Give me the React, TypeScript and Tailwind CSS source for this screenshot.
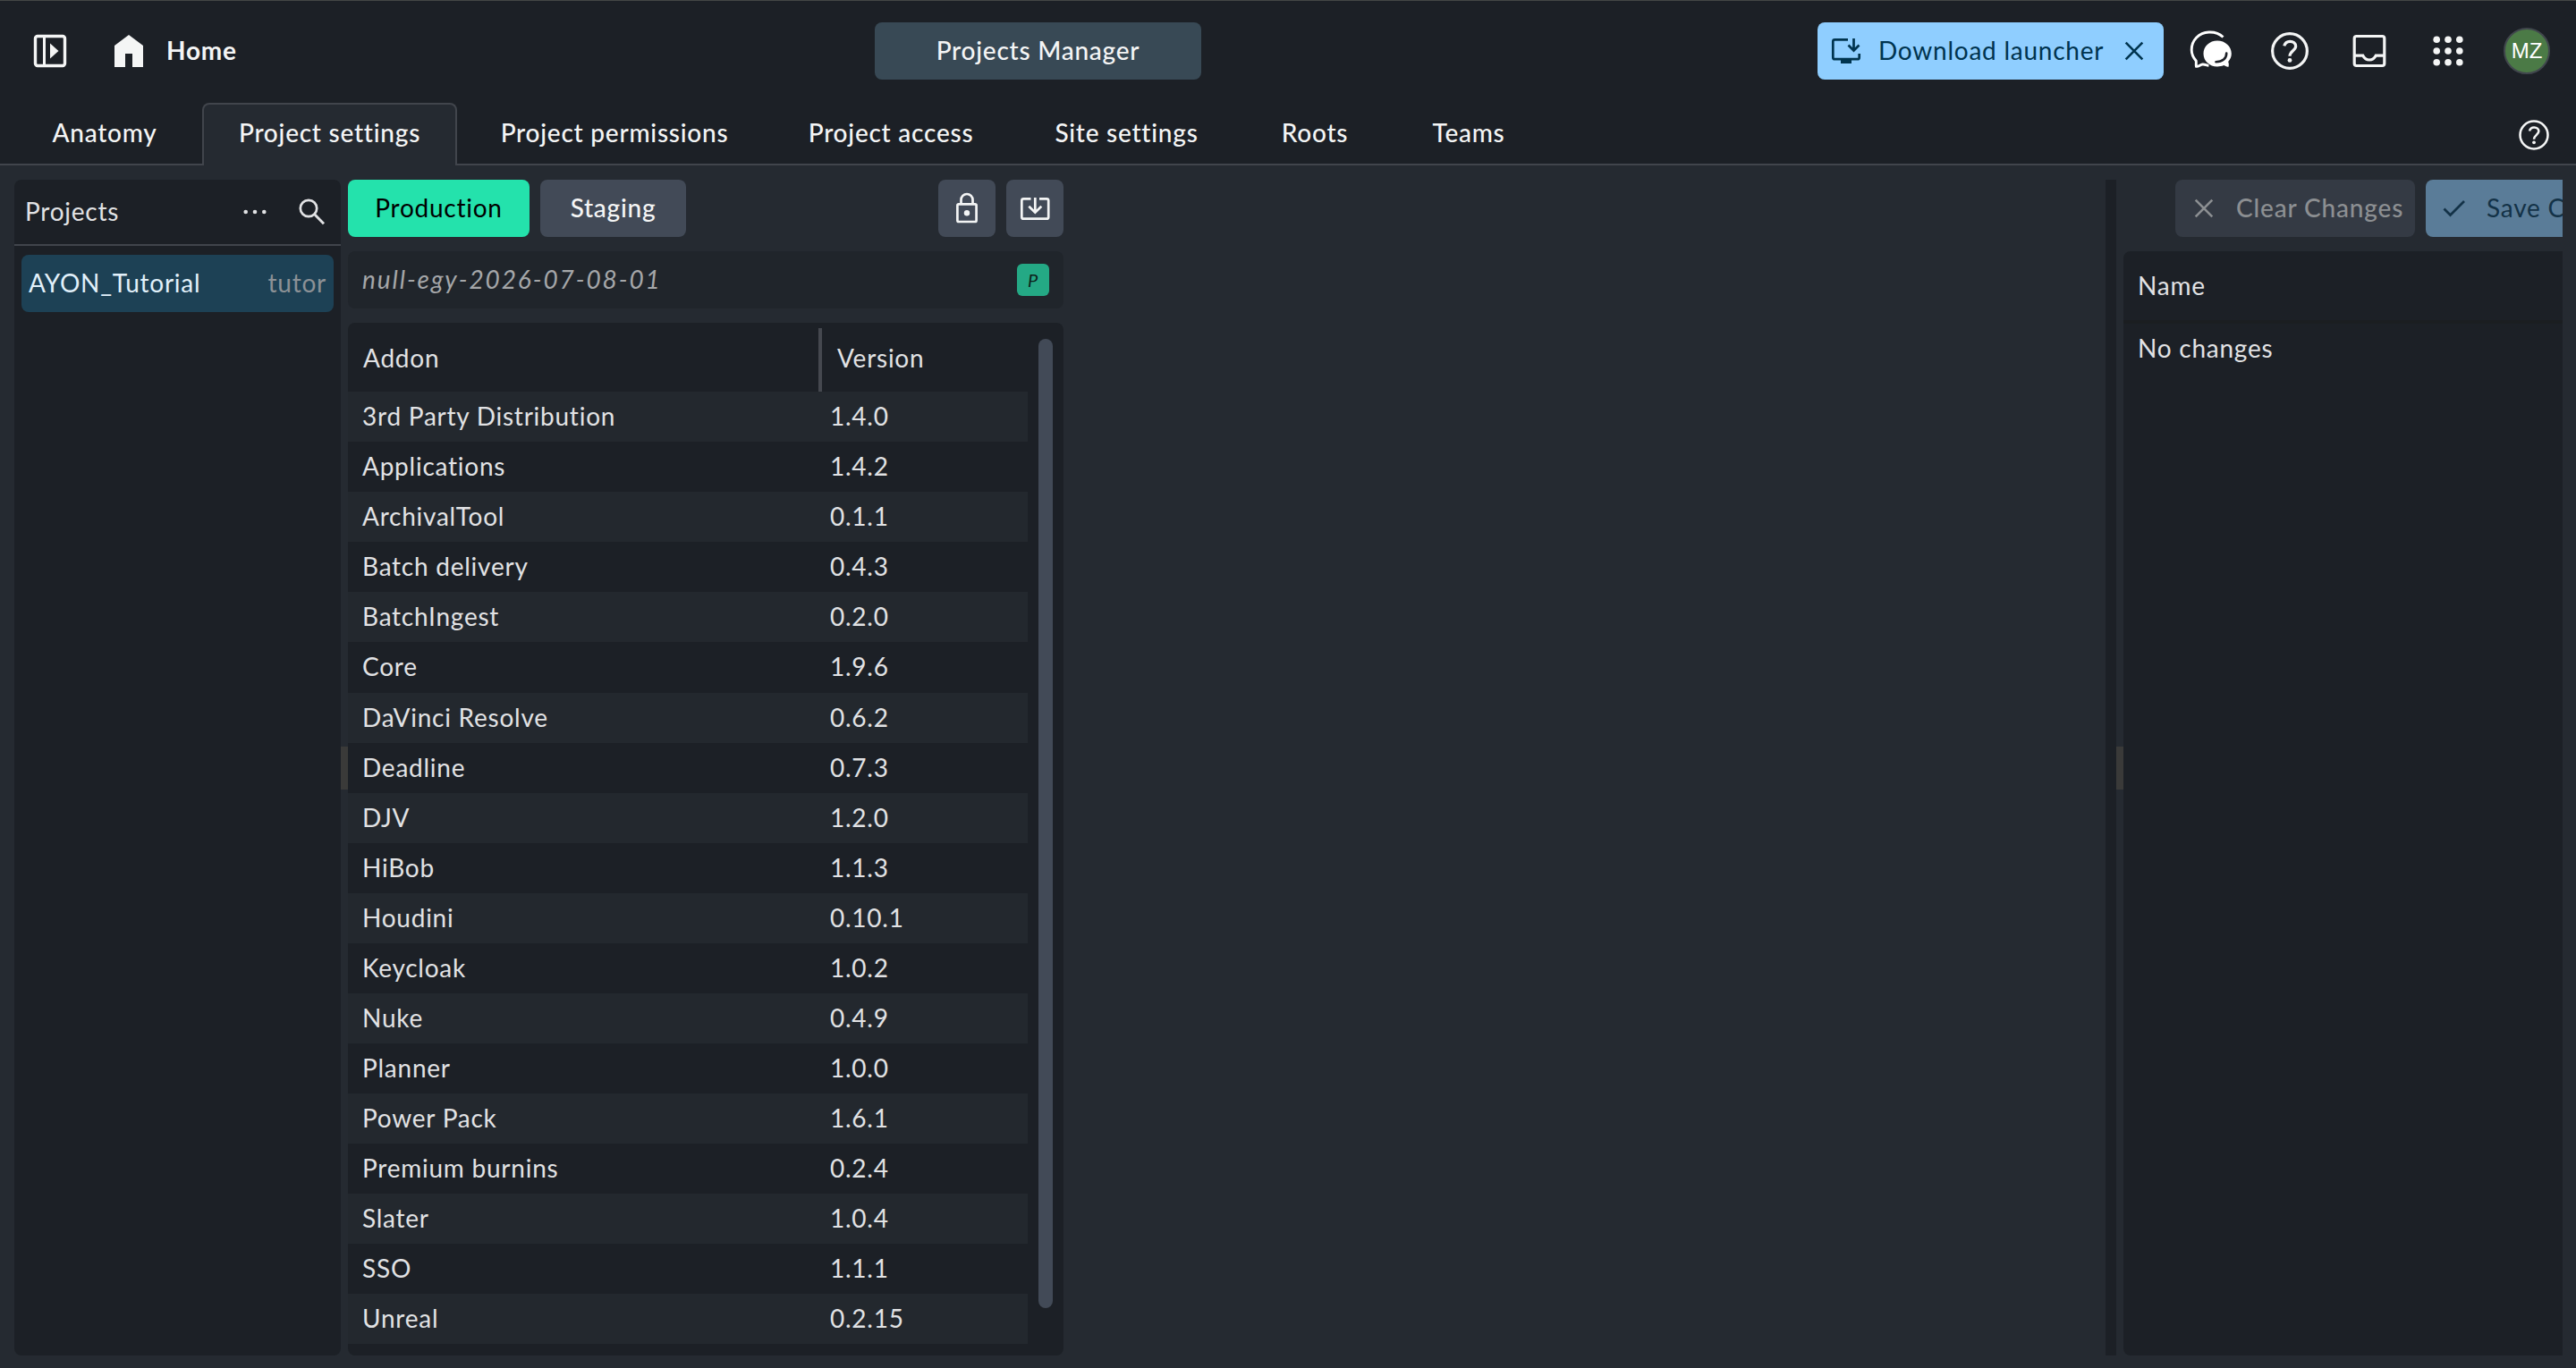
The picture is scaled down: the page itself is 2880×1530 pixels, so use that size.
import type { ReactNode } from 'react';
import clsx from 'clsx';

const tabs = [
  { label: 'Anatomy', width: 'w-[202px]' },
  { label: 'Project settings', width: 'w-[285px]', active: true },
  { label: 'Project permissions', width: 'w-[336px]' },
  { label: 'Project access', width: 'w-[266px]' },
  { label: 'Site settings', width: 'w-[245px]' },
  { label: 'Roots', width: 'w-[160px]' },
  { label: 'Teams', width: 'w-[168px]' },
];

const addons = [
  { name: '3rd Party Distribution', version: '1.4.0' },
  { name: 'Applications', version: '1.4.2' },
  { name: 'ArchivalTool', version: '0.1.1' },
  { name: 'Batch delivery', version: '0.4.3' },
  { name: 'BatchIngest', version: '0.2.0' },
  { name: 'Core', version: '1.9.6' },
  { name: 'DaVinci Resolve', version: '0.6.2' },
  { name: 'Deadline', version: '0.7.3' },
  { name: 'DJV', version: '1.2.0' },
  { name: 'HiBob', version: '1.1.3' },
  { name: 'Houdini', version: '0.10.1' },
  { name: 'Keycloak', version: '1.0.2' },
  { name: 'Nuke', version: '0.4.9' },
  { name: 'Planner', version: '1.0.0' },
  { name: 'Power Pack', version: '1.6.1' },
  { name: 'Premium burnins', version: '0.2.4' },
  { name: 'Slater', version: '1.0.4' },
  { name: 'SSO', version: '1.1.1' },
  { name: 'Unreal', version: '0.2.15' },
];

interface IconProps {
  className?: string;
}

const Svg = ({ size, className, children }: IconProps & { size: number; children: ReactNode }) => (
  <svg
    width={size}
    height={size}
    viewBox={`0 0 ${size} ${size}`}
    fill="none"
    stroke="currentColor"
    className={clsx('shrink-0', className)}
  >
    {children}
  </svg>
);

const PanelIcon = () => (
  <Svg size={48}>
    <rect x="7.5" y="7.5" width="33" height="33" rx="2.5" strokeWidth="3.4" />
    <path d="M17.5 7v34" strokeWidth="3" />
    <path d="M24 15.5v17l9.5-8.5z" fill="currentColor" stroke="none" />
  </Svg>
);

const HomeIcon = () => (
  <Svg size={48}>
    <path d="M8 42V18L24 6l16 12v24H28V27h-8v15z" fill="currentColor" stroke="none" />
  </Svg>
);

const HelpIcon = ({ size }: { size: number }) => (
  <svg width={size} height={size} viewBox="0 0 48 48" fill="none" stroke="currentColor" className="shrink-0">
    <circle cx="24" cy="24" r="18.6" strokeWidth="3.1" />
    <path d="M18 18.6c.9-3.2 3.2-4.9 6.2-4.9 3.5 0 6.2 2.2 6.2 5.3 0 4.4-6.4 5.4-6.4 10.6" strokeWidth="3.1" />
    <circle cx="24" cy="34" r="2.3" fill="currentColor" stroke="none" />
  </svg>
);

const InboxIcon = () => (
  <Svg size={48}>
    <rect x="7.2" y="7.5" width="33.6" height="33" rx="2.5" strokeWidth="3.2" />
    <path d="M7 29.2h9.8c1.6 3 4 4.8 7.2 4.8s5.6-1.8 7.2-4.8H41" strokeWidth="3.2" />
  </Svg>
);

const AppsIcon = () => (
  <Svg size={48}>
    {[11.2, 24, 36.8].map((y) =>
      [11.2, 24, 36.8].map((x) => <circle key={`${x}-${y}`} cx={x} cy={y} r="3.8" fill="currentColor" stroke="none" />)
    )}
  </Svg>
);

const ChatIcon = () => (
  <Svg size={48}>
    <path
      d="M38.5 8.5C34.500 4.700 28.500 2.700 22.500 3 11.500 3.500 3.200 12 3.200 22.800c0 5 1.900 8.700 5 12.200.5 1.800-.3 4.500.2 6.300 2.500.6 4.300-1.900 7-2.300 3-.4 4.300 1.300 7 1.400"
      strokeWidth="2.9"
    />
    <path
      d="M32 12.500c8.700 0 15.800 6.300 15.800 14.500 0 3.700-1.500 6.600-3.600 9 .5 1.600 1 3.400.3 5.700-2.200.2-3.700-.7-5.300-1.600-2.200 1-4.700 1.400-7.200 1.400-8.700 0-15.500-6.300-15.500-14.500S23.300 12.500 32 12.500z"
      fill="currentColor"
      stroke="none"
    />
    <path d="M42.200 26.500c.1 5.800-4.400 9.700-11.700 9.700" stroke="#1c1f26" strokeWidth="2.6" strokeLinecap="round" />
  </Svg>
);

const InstallDesktopIcon = () => (
  <Svg size={40}>
    <path d="M22 7.300H7.300a2 2 0 0 0-2 2v17.900a2 2 0 0 0 2 2h25.400a2 2 0 0 0 2-2V23" strokeWidth="2.7" />
    <path d="M14 29.500h12V34H14z" fill="currentColor" stroke="none" />
    <path d="M28.500 6v12.500M22.500 13.500l6 6 6-6" strokeWidth="2.7" />
  </Svg>
);

const CloseIcon = () => (
  <Svg size={40}>
    <path d="M10.700 10.700l18.600 18.600M29.300 10.700L10.700 29.300" strokeWidth="2.6" />
  </Svg>
);

const CheckIcon = () => (
  <Svg size={40}>
    <path d="M8.500 20.500l7 7L31 12" strokeWidth="2.7" />
  </Svg>
);

const MoreIcon = () => (
  <Svg size={40}>
    {[9.7, 20, 30.3].map((x) => (
      <circle key={x} cx={x} cy="20" r="2.3" fill="currentColor" stroke="none" />
    ))}
  </Svg>
);

const SearchIcon = () => (
  <Svg size={40}>
    <circle cx="16" cy="16" r="9.2" strokeWidth="2.7" />
    <path d="M22.500 22.500l10.500 10.800" strokeWidth="2.9" />
  </Svg>
);

const LockIcon = () => (
  <Svg size={40}>
    <rect x="9.4" y="15.4" width="21.2" height="19.6" rx="1.5" strokeWidth="2.7" />
    <path d="M13.500 15v-4.500a6.500 6.500 0 0 1 13 0V15" strokeWidth="2.7" />
    <circle cx="20" cy="25.3" r="3.200" fill="currentColor" stroke="none" />
  </Svg>
);

const ImportIcon = () => (
  <Svg size={40}>
    <path d="M15.500 9.400H7.300a2 2 0 0 0-2 2v18.300a2 2 0 0 0 2 2h25.900a2 2 0 0 0 2-2V11.400a2 2 0 0 0-2-2H25" strokeWidth="2.7" />
    <path d="M20.300 8v15.500M13.300 17.700l7 7 7-7" strokeWidth="2.7" />
  </Svg>
);

const ResizeHandle = () => (
  <div className="flex w-2 shrink-0 items-center">
    <div className="h-12 w-full bg-[#3a3a39]" />
  </div>
);

const Header = () => (
  <header className="grid h-[114px] grid-cols-[978px_365px_1fr] border-t border-[#444746] pr-[29px]">
    <div className="flex h-28 items-center pl-8">
      <PanelIcon />
      <div className="ml-10 flex items-center gap-[18px]">
        <HomeIcon />
        <span className="pb-0.5 font-bold">Home</span>
      </div>
    </div>
    <button className="mt-6 h-16 rounded-lg bg-[#384955] pb-0.5 font-medium">Projects Manager</button>
    <div className="flex h-28 items-center justify-end">
      <button className="flex h-16 w-[387px] items-center rounded-lg bg-[#8fceff] pl-3 text-[#00344f]">
        <InstallDesktopIcon />
        <span className="ml-4 w-[266px] pb-0.5 text-left">Download launcher</span>
        <CloseIcon />
      </button>
      <div className="ml-7 flex items-center gap-10">
        <span className="text-white">
          <ChatIcon />
        </span>
        <HelpIcon size={50} />
        <InboxIcon />
        <AppsIcon />
      </div>
      <div className="ml-[38px] flex size-[52px] items-center justify-center rounded-full border-2 border-[#41474d] bg-[#4b7a46] font-['Liberation_Sans',sans-serif] text-2xl tracking-normal text-white">
        MZ
      </div>
    </div>
  </header>
);

const TabBar = () => (
  <nav className="flex h-[71px] border-b-2 border-[#41454c] pr-[27px] pl-4">
    <div className="flex flex-1 gap-2 pt-px">
      {tabs.map((tab) => (
        <div
          key={tab.label}
          className={clsx(
            'flex justify-center rounded-t-lg border-2 border-b-0 pt-[11px] leading-10 font-medium',
            tab.width,
            tab.active ? 'h-[71px] border-[#41454c] bg-[#252a31]' : 'border-transparent'
          )}
        >
          {tab.label}
        </div>
      ))}
    </div>
    <div className="pt-[17px]">
      <HelpIcon size={40} />
    </div>
  </nav>
);

const ProjectList = () => (
  <aside className="w-[365px] shrink-0 rounded-lg bg-[#1c2026]">
    <div className="flex h-[74px] items-center border-b-2 border-[#41454c] pl-3 text-[#e1e2e4]">
      <span className="flex-1 pb-0.5">Projects</span>
      <MoreIcon />
      <div className="mr-3 ml-6">
        <SearchIcon />
      </div>
    </div>
    <div className="mx-2 mt-2.5 flex h-16 items-center justify-between rounded-lg bg-[#1d4155] px-2 pb-0.5 text-[#e1f0fa]">
      <span>AYON_Tutorial</span>
      <span className="text-[#8c9196]">tutor</span>
    </div>
  </aside>
);

const AddonTable = () => (
  <div className="flex flex-1 overflow-hidden rounded-lg bg-[#1c2026] text-[#e1e2e4]">
    <div className="w-[760px]">
      <div className="flex h-[77px] pt-1.5">
        <div className="w-[526px] pt-[13px] pl-[17px] leading-10">Addon</div>
        <div className="w-1 bg-[#45484f]" />
        <div className="pt-[13px] pl-[17px] leading-10">Version</div>
      </div>
      {addons.map((addon, i) => (
        <div
          key={addon.name}
          className={clsx('flex px-4 pt-[7px] leading-10', i === 5 ? 'h-[57px]' : 'h-14', i % 2 === 0 && 'bg-[#23282e]')}
        >
          <span className="w-[523px]">{addon.name}</span>
          <span>{addon.version}</span>
        </div>
      ))}
    </div>
    <div className="mt-[18px] ml-3 h-[1084px] w-4 rounded-full bg-[#424a57]" />
  </div>
);

const AddonPanel = () => (
  <section className="flex w-[800px] shrink-0 flex-col">
    <div className="flex h-16 gap-3">
      <button className="w-[203px] rounded-lg bg-[#24e2ac] pb-0.5 text-black">Production</button>
      <button className="w-[163px] rounded-lg bg-[#424a57] pb-0.5 font-medium">Staging</button>
      <button className="ml-auto flex size-16 items-center justify-center rounded-lg bg-[#424a57]">
        <LockIcon />
      </button>
      <button className="flex size-16 items-center justify-center rounded-lg bg-[#424a57]">
        <ImportIcon />
      </button>
    </div>
    <div className="my-4 flex h-16 shrink-0 items-center justify-between rounded-lg bg-[#20252b] px-4 text-[#a5a7a9] italic">
      <span className="pb-0.5 tracking-[0.068em]">null-egy-2026-07-08-01</span>
      <span className="flex size-9 items-center justify-center rounded-md bg-[#24a985] text-xl text-[#0d1f1a]">P</span>
    </div>
    <AddonTable />
  </section>
);

const ChangesPanel = () => (
  <section className="flex w-[491px] shrink-0 flex-col overflow-hidden">
    <div className="flex h-16 shrink-0 gap-3 pl-[58px]">
      <button className="flex w-[268px] shrink-0 items-center rounded-lg bg-[#343a44] pl-3 font-medium text-[#8c8f92]">
        <CloseIcon />
        <span className="ml-4 pb-0.5 tracking-[0.03em]">Clear Changes</span>
      </button>
      <button className="flex w-[264px] shrink-0 items-center rounded-lg bg-[#5a7c98] pl-3 whitespace-nowrap text-[#133247]">
        <CheckIcon />
        <span className="ml-4 pb-0.5">Save Changes</span>
      </button>
    </div>
    <div className="mt-4 flex-1 rounded-l-lg bg-[#1c2026] text-[#e1e2e4]">
      <div className="h-[81px] border-b-4 border-[#1b1e21] pt-[18px] pl-4 leading-10">Name</div>
      <div className="pt-[7px] pl-4 leading-10">No changes</div>
    </div>
  </section>
);

export default function App() {
  return (
    <div className="flex h-[1530px] w-[2880px] flex-col overflow-hidden bg-[#1c2026] font-['Lato',sans-serif] text-[28px] leading-10 tracking-[0.027em] text-[#f4f5f5]">
      <Header />
      <TabBar />
      <main className="flex flex-1 bg-[#252a31] pt-4 pr-[15px] pb-3.5 pl-4">
        <ProjectList />
        <ResizeHandle />
        <AddonPanel />
        <div className="flex-1" />
        <div className="w-3 shrink-0 bg-[#1c2026]" />
        <ResizeHandle />
        <ChangesPanel />
      </main>
    </div>
  );
}
